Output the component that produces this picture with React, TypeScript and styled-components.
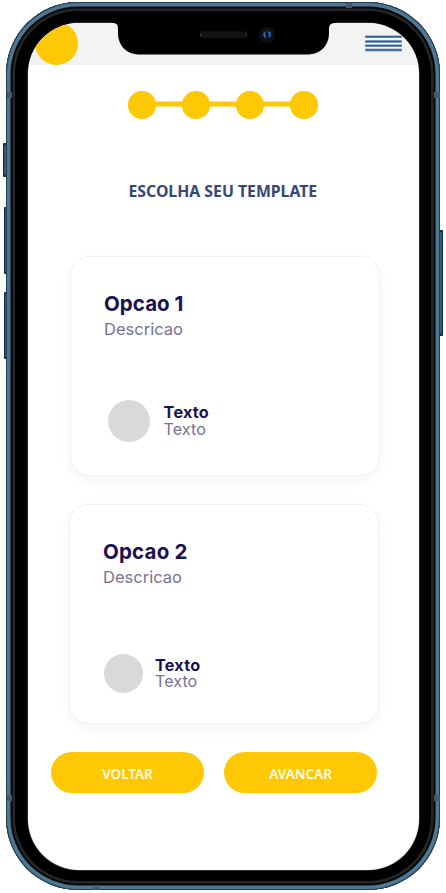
import React from 'react';
import styled, { createGlobalStyle } from 'styled-components';

const Global = createGlobalStyle`
  * { box-sizing: border-box; }
  body { margin: 0; background: #fff; overflow: hidden; }
`;

const Stage = styled.main`
  position: relative;
  width: 446px;
  height: 893px;
  padding: 2px 6px 3px;
  overflow: hidden;
`;

const Phone = styled.div`
  position: relative;
  width: 434px;
  height: 888px;
  padding: 21px 21px 20px 22px;
  border-radius: 72px;
  background: #000;
  box-shadow:
    inset 0 0 0 1px #263d4e,
    inset 0 0 0 4.5px #4c7895,
    inset 0 0 0 6.5px #050708,
    inset 0 0 0 9px #242627;
`;

const Screen = styled.div`
  width: 391px;
  height: 847px;
  border-radius: 51px;
  background: #fff;
  overflow: hidden;
  box-shadow: 0 0 0 0.5px #555;
`;

const SideButton = styled.i<{ $side: 'left' | 'right'; $top: number; $height: number; $depth: number }>`
  position: absolute;
  ${(p) => p.$side}: ${(p) => 6 - p.$depth}px;
  top: ${(p) => p.$top}px;
  width: ${(p) => p.$depth + 1}px;
  height: ${(p) => p.$height}px;
  border: 1px solid #132a39;
  border-top-width: 2px;
  border-bottom-width: 2px;
  border-radius: 1px;
  background: #345a72;
`;

const Antenna = styled.i<{ $x: number; $y: number; $w: number; $h: number }>`
  position: absolute;
  left: ${(p) => p.$x}px;
  top: ${(p) => p.$y}px;
  width: ${(p) => p.$w}px;
  height: ${(p) => p.$h}px;
  background: #475866;
`;

const NotchArt = styled.svg`
  position: absolute;
  left: 112px;
  top: 22px;
`;

const Header = styled.header`
  display: flex;
  justify-content: space-between;
  height: 42px;
  padding: 0 17px 0 6.5px;
  background: #f3f3f3;
`;

const Logo = styled.div`
  width: 43px;
  height: 43px;
  margin-top: -1px;
  border-radius: 50%;
  background: #ffc805;
`;

const MenuIcon = styled.svg`
  margin-top: 12px;
`;

const Stepper = styled.div`
  display: flex;
  align-items: center;
  margin: 26.2px 0 0 99.8px;
`;

const Step = styled.div`
  width: 28.4px;
  height: 27.4px;
  border-radius: 50%;
  background: #ffc805;
`;

const Link = styled.div`
  width: 27.6px;
  height: 5px;
  margin: 0 -1px;
  transform: translateY(-0.5px);
  background: #ffc805;
`;

const Title = styled.h1`
  margin: 60.4px 0 0 100.5px;
  font: 700 15.8px/24px 'Noto Sans', sans-serif;
  letter-spacing: 0;
  white-space: nowrap;
  color: #394678;
`;

const Cards = styled.section`
  display: grid;
  gap: 28px;
  margin-top: 53px;
`;

const Card = styled.article<{ $left: number }>`
  width: 310px;
  height: 220px;
  margin-left: ${(p) => p.$left}px;
  padding: 34px 0 0 33px;
  border: 1px solid #f1f0f8;
  border-radius: 20px;
  background: #fff;
  box-shadow: 0 5px 14px rgba(20, 20, 43, 0.04);
  font-family: Inter, sans-serif;
`;

const CardTitle = styled.h2<{ $spacing: number }>`
  margin: 0;
  font-size: 20.5px;
  font-weight: 650;
  line-height: 25px;
  letter-spacing: ${(p) => p.$spacing}px;
  color: #1b1153;
`;

const CardText = styled.p`
  margin: 2px 0 0;
  font-size: 16.5px;
  line-height: 22px;
  color: #777294;
`;

const Author = styled.div<{ $top: number; $left: number; $gap: number }>`
  display: flex;
  align-items: center;
  gap: ${(p) => p.$gap}px;
  margin: ${(p) => p.$top}px 0 0 ${(p) => p.$left}px;
`;

const Avatar = styled.div<{ $size: number }>`
  width: ${(p) => p.$size}px;
  height: ${(p) => p.$size}px;
  border-radius: 50%;
  background: #d9d9d9;
`;

const AuthorText = styled.div<{ $line: number }>`
  font-size: 16.2px;
  line-height: ${(p) => p.$line}px;
  color: #777294;
`;

const Name = styled.strong`
  display: block;
  font-size: 16.2px;
  font-weight: 650;
  letter-spacing: 0.25px;
  color: #1b1153;
`;

const Actions = styled.footer`
  display: flex;
  gap: 20px;
  margin: 28px 0 0 23px;
`;

const Action = styled.button`
  width: 153px;
  height: 41px;
  padding: 3px 0 0;
  border: 0;
  border-radius: 21px;
  background: #ffc805;
  color: #fffbe8;
  font: 600 13.5px/20px 'Noto Sans', sans-serif;
  letter-spacing: 0;
`;

const options = [
  { title: 'Opcao 1', left: 42, spacing: 0.05, top: 60, inset: 3.6, size: 42, gap: 14, line: 17 },
  { title: 'Opcao 2', left: 41, spacing: 0.2, top: 66, inset: 1, size: 39, gap: 12, line: 16 },
];

function Notch() {
  return (
    <NotchArt width="224" height="34" viewBox="112 22 224 34">
      <defs>
        <pattern id="mesh" width="3" height="3" patternUnits="userSpaceOnUse">
          <rect width="3" height="3" fill="#111" />
          <circle cx="1.5" cy="1.5" r=".7" fill="#1e1e1e" />
        </pattern>
      </defs>
      <path d="M112 22V23C116.500 23 118 24.500 118 29V33C118 46 127 54.500 140 54.500H307C320 54.500 329 46 329 33V29C329 24.500 331 23 336 23V22Z" fill="#000" />
      <rect x="200.500" y="31.500" width="46" height="6.500" rx="3.200" fill="url(#mesh)" />
      <path d="M201 32.500Q199.800 34.800 201 37M246 32.500Q247.200 34.800 246 37" fill="none" stroke="#555" strokeWidth=".7" />
      <circle cx="267" cy="35" r="8" fill="#0d0f11" />
      <circle cx="267" cy="34.800" r="4.300" fill="#10254b" />
      <path d="M264.800 32.500Q263 35 265.500 37.300M268.500 32Q271.500 33.500 269.500 37" fill="none" stroke="#3f6fb0" strokeWidth="1.400" />
      <path d="M267 31.500V38" stroke="#080b18" strokeWidth="1.500" />
    </NotchArt>
  );
}

export default function App() {
  return (
    <Stage>
      <Global />
      <SideButton $side="left" $top={143} $height={34} $depth={3.5} />
      <SideButton $side="left" $top={207} $height={67} $depth={2.5} />
      <SideButton $side="left" $top={292} $height={67} $depth={2.5} />
      <SideButton $side="right" $top={230} $height={106} $depth={3} />
      <Phone>
        <Screen>
          <Header>
            <Logo />
            <MenuIcon width="37" height="18" viewBox="0 0 37 18" aria-label="Menu">
              <path d="M0 1.700H37M0 6.500H37M0 10.700H37M0 15H37" stroke="#9bb2ce" strokeWidth="2.800" />
              <path d="M.5 1.700H36.500M.5 6.500H36.500M.5 10.700H36.500M.5 15H36.500" stroke="#285b91" strokeWidth="1.600" />
            </MenuIcon>
          </Header>
          <Stepper>
            <Step /><Link /><Step /><Link /><Step /><Link /><Step />
          </Stepper>
          <Title>ESCOLHA SEU TEMPLATE</Title>
          <Cards>
            {options.map((o) => (
              <Card key={o.title} $left={o.left}>
                <CardTitle $spacing={o.spacing}>{o.title}</CardTitle>
                <CardText>Descricao</CardText>
                <Author $top={o.top} $left={o.inset} $gap={o.gap}>
                  <Avatar $size={o.size} />
                  <AuthorText $line={o.line}>
                    <Name>Texto</Name>
                    Texto
                  </AuthorText>
                </Author>
              </Card>
            ))}
          </Cards>
          <Actions>
            <Action>VOLTAR</Action>
            <Action>AVANCAR</Action>
          </Actions>
        </Screen>
      </Phone>
      <Notch />
      <Antenna $x={346} $y={3} $w={6} $h={5} />
      <Antenna $x={93} $y={885} $w={6} $h={5} />
      <Antenna $x={7} $y={92} $w={5} $h={6} />
      <Antenna $x={434} $y={92} $w={6} $h={6} />
      <Antenna $x={7} $y={795} $w={5} $h={6} />
      <Antenna $x={434} $y={795} $w={6} $h={6} />
    </Stage>
  );
}
